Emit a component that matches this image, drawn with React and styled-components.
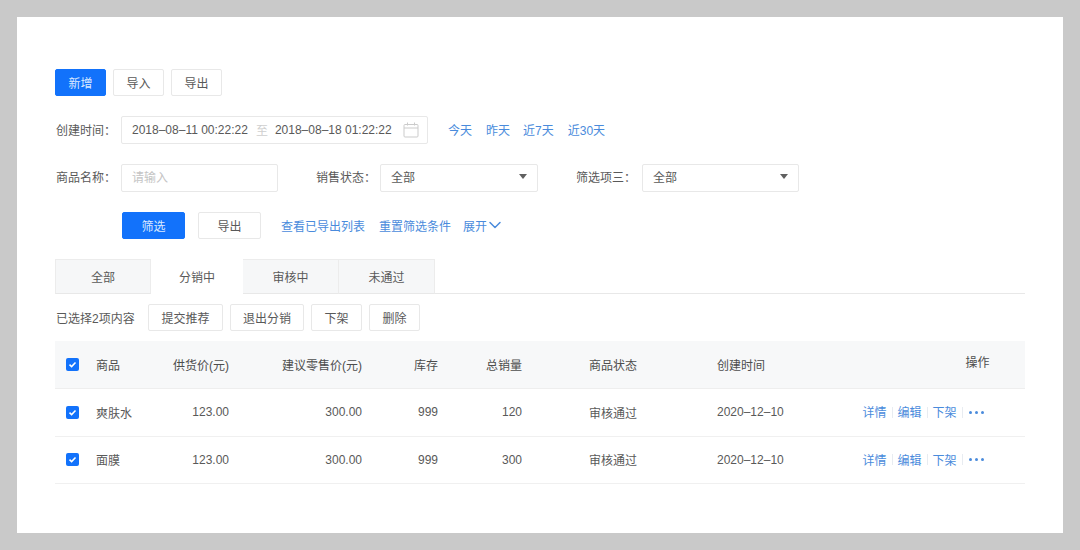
import React from 'react';
import styled, { createGlobalStyle } from 'styled-components';
import { ChevronDown } from 'lucide-react';

const GlobalStyle = createGlobalStyle`
	html, body {
		margin: 0;
		padding: 0;
		background: #c9c9c9;
	}
	body {
		font-family: "Liberation Sans", "Noto Sans CJK SC", sans-serif;
		font-size: 12px;
		color: #595959;
	}
`;

const BLUE = '#4a8bdc';
const PRIMARY = '#1272fb';
const LINE = '#e8e8e8';

const Page = styled.div`
	width: 1080px;
	height: 550px;
	padding: 17px;
	box-sizing: border-box;
	overflow: hidden;
`;

const Card = styled.div`
	height: 516px;
	box-sizing: border-box;
	padding: 52px 38px 0;
	background: #fff;
	display: flex;
	flex-direction: column;
`;

const Row = styled.div`
	display: flex;
	align-items: center;
	height: ${p => p.$h || 28}px;
	margin-bottom: ${p => p.$mb ?? 20}px;
	gap: ${p => p.$gap || 0}px;
	padding-left: ${p => p.$pl || 0}px;
`;

const Button = styled.button`
	width: ${p => p.$w || 51}px;
	height: 27px;
	padding: 0;
	box-sizing: border-box;
	font: inherit;
	border-radius: 2px;
	border: 1px solid ${p => (p.$primary ? PRIMARY : LINE)};
	background: ${p => (p.$primary ? PRIMARY : '#fff')};
	color: ${p => (p.$primary ? '#dbe9ff' : '#595959')};
	margin-right: ${p => p.$mr || 0}px;
`;

const Label = styled.label`
	width: ${p => p.$w || 66}px;
	flex: none;
	padding: 0 0 ${p => p.$pb || 1}px 1px;
	box-sizing: border-box;
	margin-left: ${p => p.$ml || 0}px;
`;

const Box = styled.div`
	display: flex;
	align-items: center;
	width: ${p => p.$w}px;
	height: 28px;
	box-sizing: border-box;
	padding: 0 ${p => p.$pr || 10}px ${p => p.$pb || 1}px 10px;
	border: 1px solid ${LINE};
	border-radius: 2px;
	background: #fff;
`;

const Placeholder = styled.span`
	color: #c4c4c4;
`;

const To = styled.span`
	color: #cfcfcf;
	margin: 0 7px 0 8px;
`;

const SelectValue = styled.span`
	flex: 1;
`;

const Caret = styled.i`
	width: 0;
	height: 0;
	border-left: 4px solid transparent;
	border-right: 4px solid transparent;
	border-top: 5px solid #606060;
`;

const Link = styled.a`
	color: ${BLUE};
	margin: 0 0 1px ${p => p.$ml || 0}px;
	display: inline-flex;
	align-items: center;
	svg {
		margin-left: -2px;
	}
`;

const Tabs = styled.div`
	display: flex;
	height: 34px;
	margin-bottom: 10px;
	border-bottom: 1px solid ${LINE};
`;

const Tab = styled.div`
	width: ${p => (p.$active ? 92 : 96)}px;
	height: 35px;
	box-sizing: border-box;
	display: flex;
	align-items: center;
	justify-content: center;
	border: ${p => (p.$active ? 'none' : `1px solid #ececec`)};
	border-left: ${p => (p.$first ? '1px solid #ececec' : 'none')};
	background: ${p => (p.$active ? '#fff' : '#f6f7f8')};
	border-bottom: 1px solid ${p => (p.$active ? '#fff' : LINE)};
`;

const Selected = styled.span`
	width: 86px;
	padding-left: 1px;
	box-sizing: border-box;
`;

const columns = '41px 60px 73px 133px 76px 84px 195px 145.5px 162.5px';

const TableHead = styled.div`
	display: grid;
	grid-template-columns: ${columns};
	align-items: center;
	height: 48px;
	background: #f7f8f9;
	color: #4d4d4d;
	border-bottom: 1px solid #eeeeee;
	box-sizing: border-box;
`;

const TableRow = styled.div`
	display: grid;
	grid-template-columns: ${columns};
	align-items: center;
	height: 47.5px;
	box-sizing: border-box;
	border-bottom: 1px solid #f0f0f0;
`;

const Cell = styled.div`
	text-align: ${p => p.$align || 'left'};
	padding-left: ${p => p.$pl || 0}px;
	padding-bottom: ${p => p.$pb || 0}px;
`;

const CheckBox = styled.span`
	width: 13px;
	height: 13px;
	margin-left: 11px;
	border-radius: 2px;
	background: ${PRIMARY};
	display: flex;
	align-items: center;
	justify-content: center;
`;

const Ops = styled.div`
	display: flex;
	align-items: center;
	gap: 5px;
`;

const Sep = styled.i`
	width: 1px;
	height: 11px;
	background: #e8ecf1;
`;

const Dots = styled.span`
	display: flex;
	gap: 3px;
	margin-left: 1px;
	i {
		width: 3px;
		height: 3px;
		border-radius: 50%;
		background: ${BLUE};
	}
`;

const Check = () => (
	<CheckBox>
		<svg width="9" height="9" viewBox="0 0 9 9" fill="none">
			<path d="M1.5 4.6 L3.6 6.6 L7.5 2.4" stroke="#fff" strokeWidth="1.5" />
		</svg>
	</CheckBox>
);

const CalendarIcon = () => (
	<svg width="16" height="16" viewBox="0 0 16 16" fill="none" stroke="#cbcbcb" strokeWidth="1">
		<rect x="1" y="2.5" width="14" height="12.5" rx="1" />
		<path d="M1 6 H15 M4.5 0.5 V3.5 M11.5 0.5 V3.5" />
	</svg>
);

const rows = [
	{ name: '爽肤水', sales: 120 },
	{ name: '面膜', sales: 300 },
];

export default function App() {
	return (
		<Page>
			<GlobalStyle />
			<Card>
				<Row $h={27} $gap={7}>
					<Button $primary>新增</Button>
					<Button>导入</Button>
					<Button>导出</Button>
				</Row>

				<Row>
					<Label>创建时间：</Label>
					<Box $w={307} $pr={8}>
						<span>2018–08–11 00:22:22</span>
						<To>至</To>
						<span>2018–08–18 01:22:22</span>
						<SelectValue />
						<CalendarIcon />
					</Box>
					<Link $ml={20}>今天</Link>
					<Link $ml={14}>昨天</Link>
					<Link $ml={13}>近7天</Link>
					<Link $ml={14}>近30天</Link>
				</Row>

				<Row>
					<Label $pb={3}>商品名称：</Label>
					<Box $w={157} $pb={3}>
						<Placeholder>请输入</Placeholder>
					</Box>
					<Label $w={65} $ml={37} $pb={3}>销售状态：</Label>
					<Box $w={158} $pb={3}>
						<SelectValue>全部</SelectValue>
						<Caret />
					</Box>
					<Label $w={67} $ml={37} $pb={3}>筛选项三：</Label>
					<Box $w={157} $pb={3}>
						<SelectValue>全部</SelectValue>
						<Caret />
					</Box>
				</Row>

				<Row $h={27} $pl={67}>
					<Button $primary $w={63} $mr={13}>筛选</Button>
					<Button $w={63}>导出</Button>
					<Link $ml={20}>查看已导出列表</Link>
					<Link $ml={14}>重置筛选条件</Link>
					<Link $ml={12}>
						展开
						<ChevronDown size={20} strokeWidth={1.8} />
					</Link>
				</Row>

				<Tabs>
					<Tab $first>全部</Tab>
					<Tab $active>分销中</Tab>
					<Tab>审核中</Tab>
					<Tab>未通过</Tab>
				</Tabs>

				<Row $h={27} $mb={10} $gap={7}>
					<Selected>已选择2项内容</Selected>
					<Button $w={75}>提交推荐</Button>
					<Button $w={74}>退出分销</Button>
					<Button>下架</Button>
					<Button>删除</Button>
				</Row>

				<TableHead>
					<Check />
					<Cell>商品</Cell>
					<Cell $align="right">供货价(元)</Cell>
					<Cell $align="right">建议零售价(元)</Cell>
					<Cell $align="right">库存</Cell>
					<Cell $align="right">总销量</Cell>
					<Cell $pl={67}>商品状态</Cell>
					<Cell>创建时间</Cell>
					<Cell $pl={103} $pb={6}>操作</Cell>
				</TableHead>

				{rows.map(row => (
					<TableRow key={row.name}>
						<Check />
						<Cell>{row.name}</Cell>
						<Cell $align="right">123.00</Cell>
						<Cell $align="right">300.00</Cell>
						<Cell $align="right">999</Cell>
						<Cell $align="right">{row.sales}</Cell>
						<Cell $pl={67}>审核通过</Cell>
						<Cell>2020–12–10</Cell>
						<Ops>
							<Link>详情</Link>
							<Sep />
							<Link>编辑</Link>
							<Sep />
							<Link>下架</Link>
							<Sep />
							<Dots><i /><i /><i /></Dots>
						</Ops>
					</TableRow>
				))}
			</Card>
		</Page>
	);
}
